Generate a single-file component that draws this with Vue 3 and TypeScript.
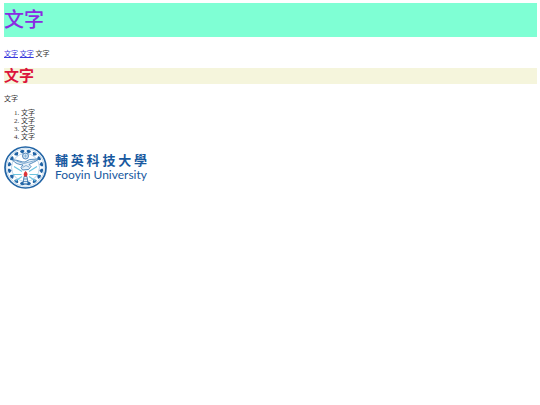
<script setup lang="ts">
const items: string[] = ['文字', '文字', '文字', '文字']
const school: string[] = Array.from('輔英科技大學')
const petals: number[] = Array.from({ length: 16 }, (_, i) => i * 22.5 + 11.25)
</script>

<template>
  <main class="page">
    <h1 class="title">文字</h1>
    <p class="links"><a href="#first">文字</a> <a href="#second">文字</a> 文字</p>
    <h2 class="subtitle">文字</h2>
    <p class="intro">文字</p>
    <ol class="list">
      <li v-for="(item, i) in items" :key="i">{{ item }}</li>
    </ol>
    <div class="brand">
      <svg class="seal" viewBox="0 0 86 86" aria-hidden="true">
        <circle cx="43" cy="43" r="41" fill="#fff" stroke="#2164a5" stroke-width="3.4" />
        <circle cx="43" cy="43" r="37.5" fill="none" stroke="#8db7dc" stroke-width="1.2" />
        <g v-for="angle in petals" :key="angle" :transform="`rotate(${angle} 43 43)`" fill="#2164a5">
          <path d="M43 15L39 11a2.2 2.2 0 0 1 2.7-3.2a1.5 1.5 0 0 1 2.6 0a2.2 2.2 0 0 1 2.7 3.2Z" />
        </g>
        <circle cx="43" cy="43" r="28" fill="#fff" stroke="#8db7dc" stroke-width="1.2" />
        <circle cx="43" cy="20" r="6" fill="#e4f0f8" stroke="#2164a5" stroke-width="1.5" />
        <path d="M43 15v10M38 20h10M40 17l6 6M46 17l-6 6" stroke="#78a9d3" stroke-width="1" />
        <path
          d="M17 28C27 27 35 33 42 32L51 27L69 26C63 32 55 34 50 37L54 41L49 47L37 48L34 43L38 38C30 37 22 35 17 28Z"
          fill="#e5eff8" stroke="#3a7ab2" stroke-width="1.7"
        />
        <path d="M25 30L39 35L63 29M37 43L44 39L50 42" fill="none" stroke="#4c88bd" stroke-width="1.3" />
        <path
          d="M36 51L20 41M35 57H17M36 61L23 70M50 51L66 41M51 57H69M50 61L63 70"
          stroke="#6cc4e0" stroke-width="2.2"
        />
        <path d="M40 61H46L48 76H38Z" fill="#e8f1f8" stroke="#2164a5" stroke-width="1.5" />
        <path d="M39 66H47M38 71H48M34 76H52" stroke="#2164a5" stroke-width="1.3" />
        <path d="M43 50C48 54 48 58 45 61H41C38 58 39 54 43 50Z" fill="#df3439" />
      </svg>
      <div class="names">
        <div class="zh"><span v-for="char in school" :key="char">{{ char }}</span></div>
        <div class="en">Fooyin University</div>
      </div>
    </div>
  </main>
</template>

<style>
body {
  margin: 0;
  background: #fff;
}
</style>

<style scoped>
.page {
  padding: 3px 3px 3px 4px;
  color: #333;
  font-family: "Liberation Serif", "Noto Sans CJK TC", serif;
  font-size: 7px;
  line-height: 8px;
}
.title {
  margin: 0 0 13px;
  background: aquamarine;
  color: blueviolet;
  font-size: 20px;
  font-weight: 500;
  line-height: 34px;
}
.links {
  margin: 0 0 10px;
}
.links a {
  color: #3838dc;
  text-decoration: underline;
}
.subtitle {
  margin: 0 0 11px;
  background: beige;
  color: crimson;
  font-size: 15px;
  font-weight: 700;
  line-height: 16px;
}
.intro {
  margin: 0 0 6px;
}
.list {
  margin: 0 0 5px;
  padding: 0 0 0 17px;
}
.brand {
  display: flex;
  align-items: center;
  gap: 8px;
}
.seal {
  width: 43px;
  height: 43px;
  flex: none;
}
.names {
  color: #1859a0;
}
.zh {
  display: flex;
  justify-content: space-between;
  font-size: 13px;
  font-weight: 700;
  line-height: 14px;
}
.en {
  font-family: Lato, sans-serif;
  font-size: 12px;
  line-height: 14px;
}
</style>
